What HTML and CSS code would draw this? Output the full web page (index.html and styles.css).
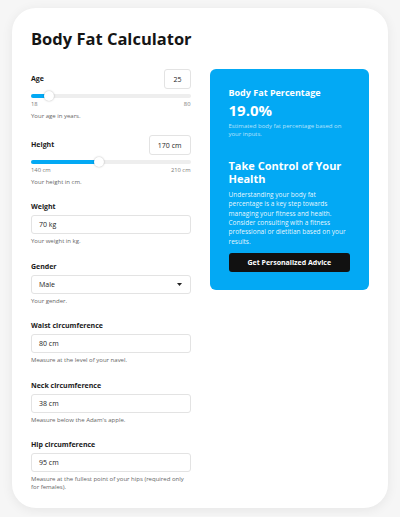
FILE: index.html
```html
<!DOCTYPE html>
<html lang="en">
<head>
  <meta charset="UTF-8">
  <title>Body Fat Calculator</title>
  <link rel="stylesheet" href="styles.css">
</head>
<body>
  <div class="card">
    <h1 class="title">Body Fat Calculator</h1>

    <div class="layout">
      <div class="form">
        <div class="field">
          <div class="field-head">
            <label class="label">Age</label>
            <div class="value-box">25</div>
          </div>
          <div class="slider">
            <div class="track"><div class="fill" style="width: 11.3%"></div></div>
            <div class="thumb" style="left: 11.3%"></div>
          </div>
          <div class="range-labels"><span>18</span><span>80</span></div>
          <p class="help">Your age in years.</p>
        </div>

        <div class="field">
          <div class="field-head">
            <label class="label">Height</label>
            <div class="value-box">170 cm</div>
          </div>
          <div class="slider">
            <div class="track"><div class="fill" style="width: 42.9%"></div></div>
            <div class="thumb" style="left: 42.9%"></div>
          </div>
          <div class="range-labels"><span>140 cm</span><span>210 cm</span></div>
          <p class="help">Your height in cm.</p>
        </div>

        <div class="field">
          <label class="label">Weight</label>
          <div class="input">70 kg</div>
          <p class="help">Your weight in kg.</p>
        </div>

        <div class="field">
          <label class="label">Gender</label>
          <div class="input select">
            <span>Male</span>
            <svg class="caret" width="5" height="3" viewBox="0 0 5 3"><path d="M0 0h5L2.5 3z" fill="#222"/></svg>
          </div>
          <p class="help">Your gender.</p>
        </div>

        <div class="field">
          <label class="label">Waist circumference</label>
          <div class="input">80 cm</div>
          <p class="help">Measure at the level of your navel.</p>
        </div>

        <div class="field">
          <label class="label">Neck circumference</label>
          <div class="input">38 cm</div>
          <p class="help">Measure below the Adam's apple.</p>
        </div>

        <div class="field">
          <label class="label">Hip circumference</label>
          <div class="input">95 cm</div>
          <p class="help">Measure at the fullest point of your hips (required only for females).</p>
        </div>
      </div>

      <div class="results">
        <h2 class="results-title">Body Fat Percentage</h2>
        <div class="percent">19.0%</div>
        <p class="note">Estimated body fat percentage based on your inputs.</p>

        <h3 class="advice-title">Take Control of Your Health</h3>
        <p class="advice-text">Understanding your body fat percentage is a key step towards managing your fitness and health. Consider consulting with a fitness professional or dietitian based on your results.</p>
        <button class="btn">Get Personalized Advice</button>
      </div>
    </div>
  </div>
</body>
</html>
```

FILE: styles.css
```css
body {
  margin: 0;
  padding: 8px 12px;
  background: #f6f6f6;
  font-family: "Open Sans", "Noto Sans", sans-serif;
  color: #1c1c1c;
}

.card {
  background: #fff;
  border-radius: 24px;
  padding: 19px 19px 17px;
  box-shadow: 0 2px 12px rgba(0, 0, 0, 0.07);
}

.title {
  margin: 0 0 18px;
  font-size: 16.5px;
  line-height: 24px;
  font-weight: 700;
  color: #151515;
}

.layout {
  display: grid;
  grid-template-columns: 1fr 1fr;
  gap: 19px;
  align-items: start;
}

/* form column */
.field { margin-bottom: 15px; }
.field:last-child { margin-bottom: 0; }

.field-head {
  display: flex;
  justify-content: space-between;
  align-items: center;
}

.label {
  display: block;
  font-size: 7px;
  font-weight: 700;
  line-height: 12px;
  color: #1a1a1a;
}

.value-box {
  height: 20px;
  box-sizing: border-box;
  padding: 0 8px;
  border: 1px solid #e3e3e3;
  border-radius: 3px;
  font-size: 7px;
  display: flex;
  align-items: center;
}

.slider {
  position: relative;
  height: 10px;
  margin-top: 2px;
  display: flex;
  align-items: center;
}

.track {
  flex: 1;
  height: 4px;
  background: #eeeeee;
  border-radius: 2px;
  overflow: hidden;
}

.fill {
  height: 100%;
  background: #03a9f4;
}

.thumb {
  position: absolute;
  top: 0;
  width: 10px;
  height: 10px;
  margin-left: -5px;
  background: #fff;
  border-radius: 50%;
  box-shadow: 0 0 2px rgba(0, 0, 0, 0.3);
}

.range-labels {
  display: flex;
  justify-content: space-between;
  font-size: 5.8px;
  line-height: 7.5px;
  color: #777;
}

.help {
  margin: 4px 0 0;
  font-size: 6px;
  line-height: 7.5px;
  color: #666;
}

.input {
  margin-top: 2px;
  height: 19px;
  box-sizing: border-box;
  border: 1px solid #e3e3e3;
  border-radius: 3px;
  padding: 0 7px;
  font-size: 7px;
  display: flex;
  align-items: center;
  justify-content: space-between;
}

.select .caret { margin-right: 1px; }

/* results column */
.results {
  background: #03a9f4;
  border-radius: 6px;
  padding: 18px 19px;
  color: #fff;
}

.results-title {
  margin: 0;
  font-size: 9px;
  line-height: 12px;
}

.percent {
  margin-top: 1.5px;
  font-size: 15px;
  line-height: 18px;
  font-weight: 700;
}

.note {
  margin: 4.5px 0 0;
  font-size: 6px;
  line-height: 7.5px;
  color: rgba(255, 255, 255, 0.7);
}

.advice-title {
  margin: 22px 0 0;
  font-size: 11px;
  line-height: 12.5px;
}

.advice-text {
  margin: 5px 0 0;
  font-size: 6.5px;
  line-height: 9.33px;
  color: rgba(255, 255, 255, 0.92);
}

.btn {
  display: block;
  width: 100%;
  height: 19px;
  margin-top: 7.5px;
  background: #111;
  color: #fff;
  border: none;
  border-radius: 3px;
  font-family: inherit;
  font-size: 7px;
  font-weight: 700;
}
```
